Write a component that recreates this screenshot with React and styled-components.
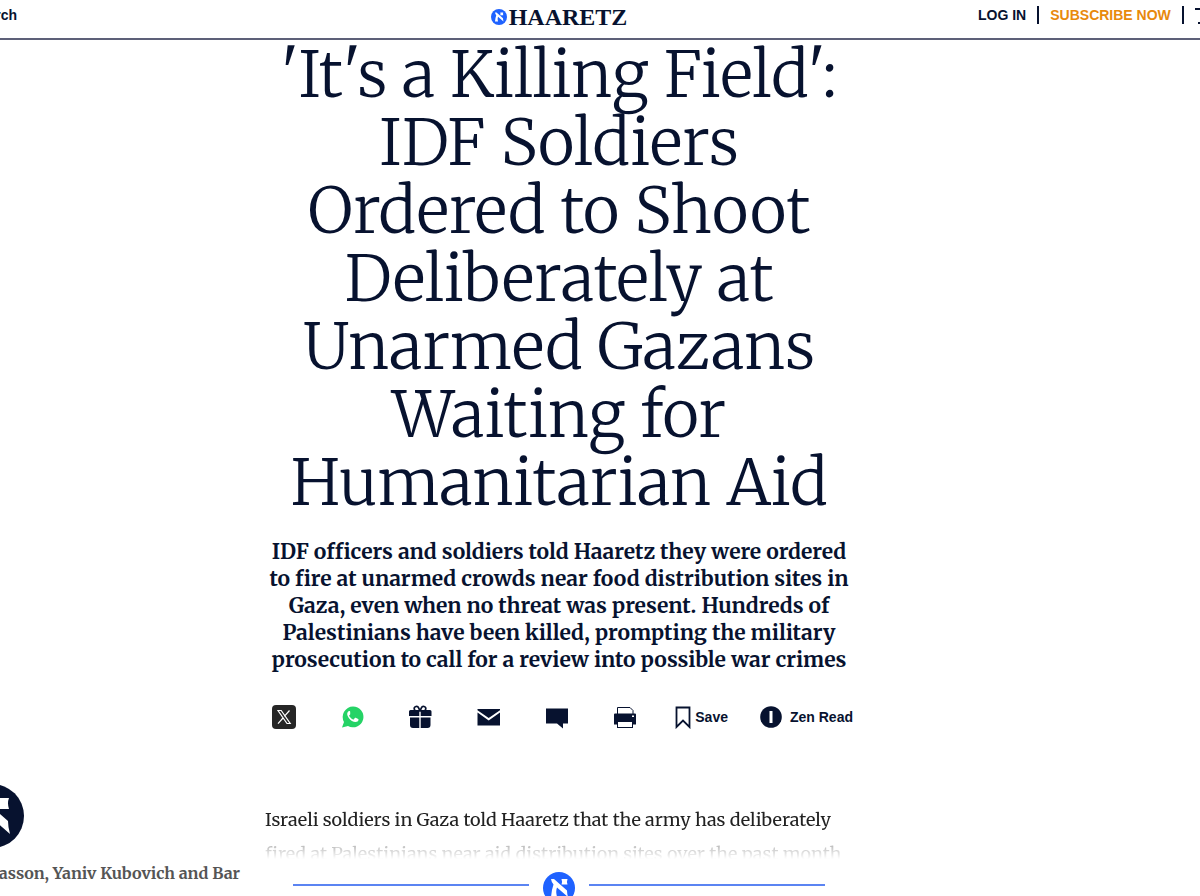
import React from "react";
import styled, { createGlobalStyle } from "styled-components";

const navy = "#07122f";
const blue = "#1f62ff";
const serif = `Merriweather, "Liberation Serif", serif`;
const sans = `"Liberation Sans", sans-serif`;

function AlephMark({ size, color }) {
  return (
    <svg width={size} height={size} viewBox="0 0 64 64" aria-hidden="true">
      <circle cx="32" cy="32" r="32" fill={color} />
      <path
        fill="#fff"
        d="M16 14H22L48 37Q48 43 50 50L28 31Q25 38 28 50H16Q17 36 21 25Q17 21 16 14ZM37 14H49Q47 19 49 25H37Q39 19 37 14Z"
      />
    </svg>
  );
}

function XIcon() {
  return (
    <svg width="24" height="24" viewBox="0 0 24 24" aria-hidden="true">
      <rect width="24" height="24" rx="4" fill="#262626" />
      <path
        fill="none"
        stroke="#fff"
        strokeWidth="1.2"
        d="M6 5.5h3.2l9 13H15zM17.5 5.5l-5.2 5.8M11 13l-5 5.6"
      />
    </svg>
  );
}

function WhatsAppIcon() {
  return (
    <svg width="24" height="24" viewBox="0 0 24 24" aria-hidden="true">
      <path
        fill="#25d366"
        d="M13 1.500A10.400 10.400 0 0 0 4 17L2 22.500l6-1.500A10.400 10.400 0 1 0 13 1.500z"
      />
      <path
        fill="#fff"
        d="M10.200 6.700c-.3-.6-.6-.6-1.100-.6-.7.2-1.900 1.200-1.900 3 0 1.700 1.200 3.300 1.600 3.800 1.800 2.500 4.300 4.100 6.800 4.100 1.500 0 2.800-.9 2.900-2 .1-.5 0-.8-.3-1l-2.500-1.200c-.4-.2-.6-.1-.9.3l-.9 1.200c-.2.200-.4.200-.7.100-1.700-.7-3.100-1.900-4-3.500-.2-.3 0-.5.200-.7l.7-.8c.2-.3.200-.5.100-.8z"
      />
    </svg>
  );
}

function GiftIcon() {
  return (
    <svg width="24" height="24" viewBox="0 0 24 24" aria-hidden="true">
      <path
        fill={navy}
        d="M2.500 5H11.300v6H1V6.500A1.500 1.500 0 0 1 2.500 5zM12.700 5H22A1.500 1.500 0 0 1 23.500 6.500V11H12.700zM2 12.400h9.300V23H5A3 3 0 0 1 2 20zM12.700 12.400H22.500V20a3 3 0 0 1-3 3H12.700z"
      />
      <path
        fill="none"
        stroke={navy}
        strokeWidth="1.700"
        d="M12 6H8.300A2.300 2.300 0 1 1 10.600 2.800zM12 6h3.700a2.300 2.300 0 1 0-2.300-3.200z"
      />
    </svg>
  );
}

function MailIcon() {
  return (
    <svg width="24" height="24" viewBox="0 0 24 24" aria-hidden="true">
      <path
        fill={navy}
        d="M1.500 4H24v1.200L12.700 13 1.500 5.200zM1.500 7.500L12.700 15.500 24 7.500V20.500H1.500z"
      />
    </svg>
  );
}

function CommentIcon() {
  return (
    <svg width="24" height="24" viewBox="0 0 24 24" aria-hidden="true">
      <path fill={navy} d="M2 3.500h22V18.500h-5V23.500L13 18.500H2z" />
    </svg>
  );
}

function PrintIcon() {
  return (
    <svg width="24" height="24" viewBox="0 0 24 24" aria-hidden="true">
      <path fill="#fff" stroke={navy} d="M5.500 9V2.500h12.500l3 3V9" />
      <path
        fill={navy}
        d="M3 8.500h20a1 1 0 0 1 1 1V19.500H2V9.500A1 1 0 0 1 3 8.500z"
      />
      <rect x="20" y="10.500" width="2" height="1.500" fill="#fff" />
      <rect x="5.500" y="16.500" width="15" height="6" fill="#fff" stroke={navy} />
    </svg>
  );
}

function BookmarkIcon() {
  return (
    <svg width="16" height="24" viewBox="0 0 16 24" aria-hidden="true">
      <path
        fill="none"
        stroke={navy}
        strokeWidth="1.800"
        d="M1.500 2.500h13v19.500L8 15.500 1.500 22z"
      />
    </svg>
  );
}

function ZenIcon() {
  return (
    <svg width="22" height="22" viewBox="0 0 22 22" aria-hidden="true">
      <circle cx="11" cy="11" r="10.800" fill={navy} />
      <rect x="9.500" y="5" width="3" height="12" fill="#fff" />
    </svg>
  );
}

function MenuIcon() {
  return (
    <svg width="20" height="18" viewBox="0 0 20 18" aria-hidden="true">
      <path fill={navy} d="M0 2h20v2H0zM3 16h14v2H3z" />
    </svg>
  );
}

const shareItems = [
  { label: "Share on X", icon: <XIcon /> },
  { label: "Share on WhatsApp", icon: <WhatsAppIcon /> },
  { label: "Gift article", icon: <GiftIcon /> },
  { label: "Send by email", icon: <MailIcon /> },
  { label: "Comments", icon: <CommentIcon /> },
  { label: "Print", icon: <PrintIcon /> },
];

function App() {
  return (
    <>
      <GlobalStyle />
      <Header>
        <SearchSlot>
          <BarButton>Search</BarButton>
        </SearchSlot>
        <Logo href="#">
          <AlephMark size={16} color={blue} />
          HAARETZ
        </Logo>
        <Account>
          <BarButton>LOG IN</BarButton>
          <Divider />
          <SubscribeLink href="#">SUBSCRIBE NOW</SubscribeLink>
          <Divider />
          <BarButton aria-label="Menu">
            <MenuIcon />
          </BarButton>
        </Account>
      </Header>
      <Page>
        <Byline>
          <AlephMark size={64} color={navy} />
          <Authors>Nir Hasson, Yaniv Kubovich and Bar</Authors>
        </Byline>
        <Article>
          <Title>
            'It's a Killing Field':
            <br />
            IDF Soldiers
            <br />
            Ordered to Shoot
            <br />
            Deliberately at
            <br />
            Unarmed Gazans
            <br />
            Waiting for
            <br />
            Humanitarian Aid
          </Title>
          <Standfirst>
            IDF officers and soldiers told Haaretz they were ordered
            <br />
            to fire at unarmed crowds near food distribution sites in
            <br />
            Gaza, even when no threat was present. Hundreds of
            <br />
            Palestinians have been killed, prompting the military
            <br />
            prosecution to call for a review into possible war crimes
          </Standfirst>
          <ShareBar>
            <ShareGroup $gap={44}>
              {shareItems.map(({ label, icon }) => (
                <IconButton key={label} aria-label={label}>
                  {icon}
                </IconButton>
              ))}
            </ShareGroup>
            <ShareGroup $gap={32}>
              <TextButton $gap={4}>
                <BookmarkIcon />
                Save
              </TextButton>
              <TextButton $gap={8}>
                <ZenIcon />
                Zen Read
              </TextButton>
            </ShareGroup>
          </ShareBar>
          <Body>
            Israeli soldiers in Gaza told Haaretz that the army has deliberately
            <br />
            fired at Palestinians near aid distribution sites over the past
            month
          </Body>
          <Paywall>
            <Rule />
            <AlephMark size={32} color={blue} />
            <Rule />
          </Paywall>
        </Article>
      </Page>
    </>
  );
}

const GlobalStyle = createGlobalStyle`
  * {
    box-sizing: border-box;
  }
  body {
    margin: 0;
    background: #fff;
    color: ${navy};
    overflow: hidden;
  }
  button {
    padding: 0;
    border: none;
    background: none;
    color: inherit;
    cursor: pointer;
  }
  a {
    text-decoration: none;
  }
  svg {
    display: block;
    flex-shrink: 0;
  }
`;

const Header = styled.header`
  position: fixed;
  top: 0;
  left: 0;
  right: 0;
  z-index: 2;
  height: 40px;
  display: grid;
  grid-template-columns: 265fr 588fr 347fr;
  background: #fff;
  border-bottom: 2px solid #5d6078;
  font-family: ${sans};
`;

/* the search label runs off the left edge of the window */
const SearchSlot = styled.div`
  width: 17px;
  height: 30px;
  display: flex;
  justify-content: flex-end;
  overflow: hidden;
`;

const BarButton = styled.button`
  flex-shrink: 0;
  font: bold 14px/16px ${sans};
`;

const Logo = styled.a`
  height: 34px;
  display: flex;
  align-items: center;
  justify-content: center;
  gap: 2px;
  color: ${navy};
  font: bold 24px/24px "Liberation Serif", serif;
`;

const Account = styled.div`
  height: 30px;
  padding-left: 125px;
  display: flex;
  align-items: center;
  gap: 11px;
  overflow: hidden;
`;

const Divider = styled.span`
  flex-shrink: 0;
  width: 2px;
  height: 18px;
  background: ${navy};
`;

const SubscribeLink = styled.a`
  flex-shrink: 0;
  color: #e8890c;
  font: bold 14px/16px ${sans};
`;

const Page = styled.main`
  display: grid;
  grid-template-columns: 265fr 588fr 347fr;
  padding-top: 41px;
  font-family: ${serif};
`;

const Byline = styled.aside`
  width: 240px;
  padding-top: 743px;
  display: flex;
  flex-direction: column;
  align-items: flex-start;
  gap: 14px;
  & > svg {
    margin-left: -40px;
  }
`;

const Authors = styled.p`
  align-self: flex-end;
  margin: 0;
  color: #555;
  font-size: 16px;
  line-height: 22px;
  font-weight: bold;
  white-space: nowrap;
`;

const Article = styled.article`
  min-width: 0;
`;

const Title = styled.h1`
  margin: 0;
  font-size: 63px;
  line-height: 68px;
  font-weight: 300;
  text-align: center;
  white-space: nowrap;
`;

const Standfirst = styled.p`
  margin: 21px 0 0;
  font-size: 21px;
  line-height: 27px;
  font-weight: bold;
  text-align: center;
  white-space: nowrap;
`;

const ShareBar = styled.div`
  margin-top: 32px;
  padding-left: 7px;
  display: flex;
  align-items: center;
  justify-content: space-between;
`;

const ShareGroup = styled.div`
  display: flex;
  align-items: center;
  gap: ${({ $gap }) => $gap}px;
`;

const IconButton = styled.button`
  width: 24px;
  height: 24px;
`;

const TextButton = styled.button`
  display: flex;
  align-items: center;
  gap: ${({ $gap }) => $gap}px;
  font: bold 14px/24px ${sans};
`;

const Body = styled.p`
  height: 56px;
  margin: 74px 0 0;
  color: #222;
  font-size: 18px;
  line-height: 34px;
  white-space: nowrap;
  overflow: hidden;
  mask-image: linear-gradient(#000 32px, rgba(0, 0, 0, 0.4) 38px, transparent 56px);
`;

const Paywall = styled.div`
  margin-top: 13px;
  padding: 0 28px;
  display: flex;
  align-items: center;
  gap: 14px;
`;

const Rule = styled.span`
  flex: 1;
  height: 2px;
  margin-bottom: 6px;
  background: #5b84f2;
`;

export default App;
